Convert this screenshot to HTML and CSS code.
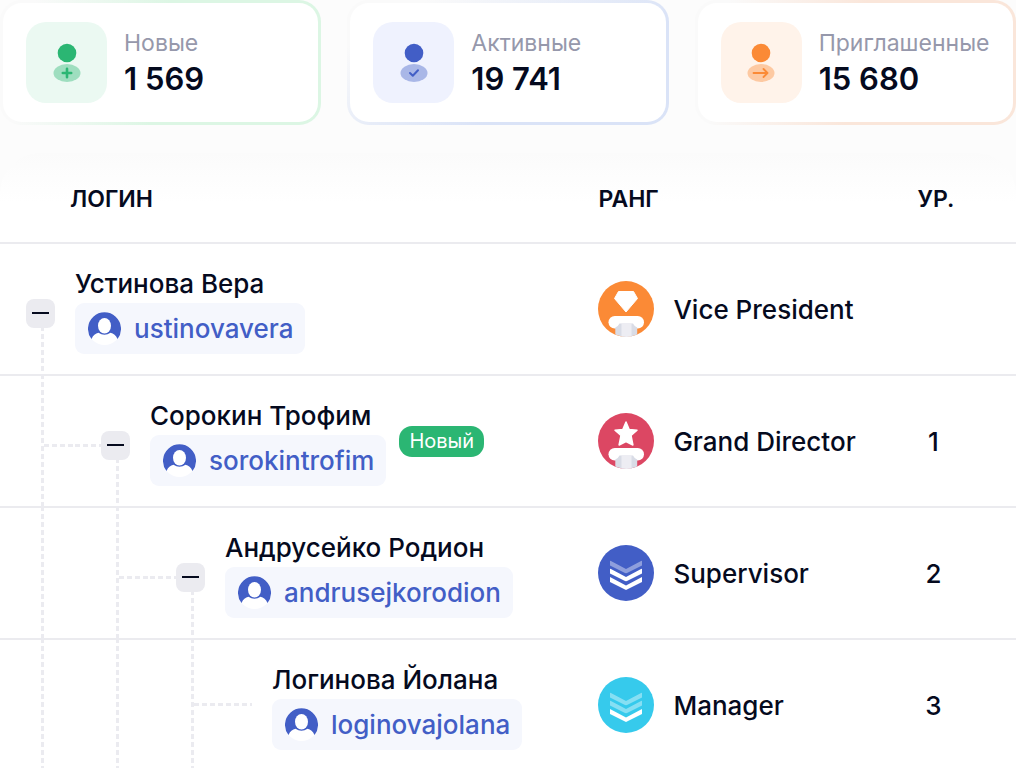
FILE: index.html
```html
<!DOCTYPE html>
<html lang="ru">
<head>
    <meta charset="UTF-8">
    <meta name="viewport" content="width=device-width, initial-scale=1.0">
    <title>Структура</title>
    <link rel="stylesheet" href="styles.css">
</head>
<body>
    <svg width="0" height="0" class="sprite" aria-hidden="true">
        <symbol id="avatar" viewBox="0 0 33 33">
            <circle cx="16.500" cy="16.500" r="16.500" fill="#fff"/>
            <path d="M3.500 27A16.500 16.500 0 1 1 29.500 27C28 23.500 25.500 21.400 22.500 20.800Q16.500 24.500 10.500 20.800C7.500 21.400 5 23.500 3.500 27Z" fill="#425ec6"/>
            <ellipse cx="16.500" cy="13.700" rx="6.500" ry="7.800" fill="#fff"/>
        </symbol>
        <symbol id="column" viewBox="0 0 56 56">
            <rect x="10.500" y="35" width="35.500" height="12.500" rx="6.250" fill="#fff"/>
            <path d="M17.300 46.500Q20.500 45 21.500 42.500H35Q36 45 39.200 46.500V53.500A28 28 0 0 1 17.300 53.500Z" fill="#d9dce6"/>
            <path d="M23.500 42.500H33.500V55.500A28 28 0 0 1 23.500 55.500Z" fill="#ededf3"/>
        </symbol>
        <symbol id="chevron" viewBox="0 0 32 13">
            <path d="M0 0L16 8.500L32 0V5L16 13L0 5Z" fill="#fff"/>
        </symbol>
    </svg>

    <div class="stats">
        <div class="card card-green">
            <div class="card-icon">
                <svg width="28" height="40" viewBox="0 0 28 40">
                    <circle cx="14" cy="10" r="9.300" fill="#2bb673"/>
                    <ellipse cx="14" cy="30" rx="13.500" ry="9" fill="#2bb673" fill-opacity="0.400"/>
                    <path d="M14 25.800V34.200M9.800 30H18.200" stroke="#2bb673" stroke-width="2.600" stroke-linecap="round"/>
                </svg>
            </div>
            <div class="card-text">
                <div class="card-label">Новые</div>
                <div class="card-value">1 569</div>
            </div>
        </div>
        <div class="card card-blue">
            <div class="card-icon">
                <svg width="28" height="40" viewBox="0 0 28 40">
                    <circle cx="14" cy="10" r="9.300" fill="#425ec6"/>
                    <ellipse cx="14" cy="30" rx="13.500" ry="9" fill="#425ec6" fill-opacity="0.400"/>
                    <path d="M10 30L12.800 32.700L18 27.300" fill="none" stroke="#425ec6" stroke-width="2" stroke-linecap="round" stroke-linejoin="round"/>
                </svg>
            </div>
            <div class="card-text">
                <div class="card-label">Активные</div>
                <div class="card-value">19 741</div>
            </div>
        </div>
        <div class="card card-orange">
            <div class="card-icon">
                <svg width="28" height="40" viewBox="0 0 28 40">
                    <circle cx="14" cy="10" r="9.300" fill="#fb8a36"/>
                    <ellipse cx="14" cy="30" rx="13.500" ry="9" fill="#fb8a36" fill-opacity="0.400"/>
                    <path d="M6.500 30H20M16.500 26L20.500 30L16.500 34" fill="none" stroke="#fb8a36" stroke-width="1.800" stroke-linecap="round" stroke-linejoin="round"/>
                </svg>
            </div>
            <div class="card-text">
                <div class="card-label">Приглашенные</div>
                <div class="card-value">15 680</div>
            </div>
        </div>
    </div>

    <table class="team">
        <thead>
            <tr>
                <th class="col-login">ЛОГИН</th>
                <th class="col-rank">РАНГ</th>
                <th class="col-level">УР.</th>
            </tr>
        </thead>
        <tbody>
            <tr>
                <td>
                    <div class="login">
                        <div class="step node root"><button class="toggle" aria-label="Свернуть"></button></div>
                        <div class="person">
                            <div class="name">Устинова Вера</div>
                            <a class="user" href="#"><svg width="33" height="33"><use href="#avatar"/></svg>ustinovavera</a>
                        </div>
                    </div>
                </td>
                <td>
                    <div class="rank">
                        <svg width="56" height="56" viewBox="0 0 56 56">
                            <circle cx="28" cy="28" r="28" fill="#fb8a36"/>
                            <path d="M20.500 10.500H35.500L39.500 17.500L28 31L16.500 17.500Z" fill="#fff" stroke="#fff" stroke-linejoin="round"/>
                            <use href="#column"/>
                        </svg>
                        Vice President
                    </div>
                </td>
                <td class="level"></td>
            </tr>
            <tr>
                <td>
                    <div class="login">
                        <div class="step line branch"></div>
                        <div class="step node"><button class="toggle" aria-label="Свернуть"></button></div>
                        <div class="person">
                            <div class="name">Сорокин Трофим</div>
                            <a class="user" href="#"><svg width="33" height="33"><use href="#avatar"/></svg>sorokintrofim</a>
                        </div>
                        <span class="badge">Новый</span>
                    </div>
                </td>
                <td>
                    <div class="rank">
                        <svg width="56" height="56" viewBox="0 0 56 56">
                            <circle cx="28" cy="28" r="28" fill="#dc4763"/>
                            <path d="M28 9L31.200 16.500L39 17.200L33 22.500L34.900 32L28 28.500L21.100 32L23 22.500L17 17.200L24.800 16.500Z" fill="#fff" stroke="#fff" stroke-width="1.500" stroke-linejoin="round"/>
                            <use href="#column"/>
                        </svg>
                        Grand Director
                    </div>
                </td>
                <td class="level">1</td>
            </tr>
            <tr>
                <td>
                    <div class="login">
                        <div class="step line"></div>
                        <div class="step line branch"></div>
                        <div class="step node"><button class="toggle" aria-label="Свернуть"></button></div>
                        <div class="person">
                            <div class="name">Андрусейко Родион</div>
                            <a class="user" href="#"><svg width="33" height="33"><use href="#avatar"/></svg>andrusejkorodion</a>
                        </div>
                    </div>
                </td>
                <td>
                    <div class="rank">
                        <svg width="56" height="56" viewBox="0 0 56 56">
                            <circle cx="28" cy="28" r="28" fill="#425ec6"/>
                            <use href="#chevron" x="12" y="15.500" width="32" height="13" opacity="0.400"/>
                            <use href="#chevron" x="12" y="23.500" width="32" height="13"/>
                            <use href="#chevron" x="12" y="32" width="32" height="13"/>
                        </svg>
                        Supervisor
                    </div>
                </td>
                <td class="level">2</td>
            </tr>
            <tr>
                <td>
                    <div class="login">
                        <div class="step line"></div>
                        <div class="step line"></div>
                        <div class="step line leaf"></div>
                        <div class="person">
                            <div class="name">Логинова Йолана</div>
                            <a class="user" href="#"><svg width="33" height="33"><use href="#avatar"/></svg>loginovajolana</a>
                        </div>
                    </div>
                </td>
                <td>
                    <div class="rank">
                        <svg width="56" height="56" viewBox="0 0 56 56">
                            <circle cx="28" cy="28" r="28" fill="#36caec"/>
                            <use href="#chevron" x="12" y="15.500" width="32" height="13" opacity="0.400"/>
                            <use href="#chevron" x="12" y="23.500" width="32" height="13" opacity="0.400"/>
                            <use href="#chevron" x="12" y="32" width="32" height="13"/>
                        </svg>
                        Manager
                    </div>
                </td>
                <td class="level">3</td>
            </tr>
        </tbody>
    </table>
</body>
</html>
```
FILE: styles.css
```css
:root {
    --dash-y: repeating-linear-gradient(to bottom, #ebebf0 0 5px, transparent 5px 8px);
    --dash-x: repeating-linear-gradient(to right, #ebebf0 0 5px, transparent 5px 8px);
}
* {
    box-sizing: border-box;
}
body {
    font-family: Inter, sans-serif;
    background-color: #fcfcfc;
    color: #050a1e;
    margin: 0;
}
.sprite {
    display: none;
}

/* Stat cards */
.stats {
    display: grid;
    grid-template-columns: repeat(3, minmax(0, 1fr));
    gap: 26px;
    margin-bottom: 28px;
}
.card {
    display: flex;
    align-items: center;
    gap: 17px;
    padding: 19px 23px;
    border: 3px solid transparent;
    border-radius: 22px;
}
.card-green {
    background: linear-gradient(#fff, #fff) padding-box, linear-gradient(100deg, #fafafa 10%, #dcf6e4 50%) border-box;
}
.card-blue {
    background: linear-gradient(#fff, #fff) padding-box, linear-gradient(150deg, #fafafa 15%, #dae3f7 65%) border-box;
}
.card-orange {
    background: linear-gradient(#fff, #fff) padding-box, linear-gradient(100deg, #fafafa 10%, #fae6da 50%) border-box;
}
.card-icon {
    display: flex;
    align-items: center;
    justify-content: center;
    flex: none;
    width: 81px;
    height: 81px;
    border-radius: 20px;
}
.card-green .card-icon {
    background-color: #ebf9f2;
}
.card-blue .card-icon {
    background-color: #eff2fe;
}
.card-orange .card-icon {
    background-color: #fff3ea;
}
.card-text {
    white-space: nowrap;
}
.card-label {
    font-size: 23px;
    line-height: 32px;
    color: #9698ab;
}
.card-value {
    font-size: 31px;
    font-weight: 600;
    line-height: 40px;
}

/* Team table */
.team {
    width: 100%;
    table-layout: fixed;
    border-spacing: 0;
    border-radius: 40px 40px 0 0;
    background: linear-gradient(#fbfbfb, #fff 50px);
    font-size: 26px;
    font-weight: 500;
}
.team th {
    height: 89px;
    padding: 2px 0 0;
    font-size: 23px;
    font-weight: 600;
    text-align: left;
}
.team td {
    padding: 0;
    border-top: 2px solid #ebebef;
}
.team .col-login {
    width: 58.9%;
    padding-left: 70px;
}
.team .col-level {
    width: 160px;
    text-align: center;
}
.login {
    display: flex;
    align-items: center;
    height: 130px;
}

/* Tree connectors, one step per nesting level */
.step {
    display: flex;
    align-items: center;
    align-self: stretch;
    flex: none;
    width: 75px;
    margin-top: -2px;
    background-repeat: no-repeat;
}
.line {
    background-image: var(--dash-y);
    background-position: 41px 0;
    background-size: 3px 100%;
}
.branch {
    background-image: var(--dash-y), var(--dash-x);
    background-position: 41px 0, 44px 70px;
    background-size: 3px 100%, 31px 3px;
}
.leaf {
    width: 122px;
    background-image: var(--dash-y), var(--dash-x);
    background-position: 41px 0, 44px 65px;
    background-size: 3px 100%, 58px 3px;
}
.node {
    padding: 10px 0 0 26px;
    background-image: var(--dash-y), var(--dash-x);
    background-position: 41px bottom, 0 70px;
    background-size: 3px 48px, 26px 3px;
}
.root {
    background-size: 3px 48px, 0 0;
}
.toggle {
    display: flex;
    align-items: center;
    justify-content: center;
    width: 29px;
    height: 29px;
    padding: 0;
    border: none;
    border-radius: 8px;
    background-color: #ebebf0;
    cursor: pointer;
}
.toggle::before {
    content: '';
    width: 17px;
    height: 2px;
    background-color: #050a1e;
}

.person {
    padding-top: 4px;
    white-space: nowrap;
}
.name {
    margin-bottom: 3px;
    line-height: 32px;
}
.user {
    display: flex;
    align-items: center;
    gap: 13px;
    width: max-content;
    height: 51px;
    padding: 0 12px 0 13px;
    border-radius: 9px;
    background-color: #f5f7fd;
    color: #425ec6;
    text-decoration: none;
}
.badge {
    margin-left: 13px;
    padding: 0 10px;
    border-radius: 13px;
    background-color: #2bb673;
    color: #fff;
    font-size: 20px;
    font-weight: 400;
    line-height: 31px;
}
.rank {
    display: flex;
    align-items: center;
    gap: 19px;
    white-space: nowrap;
}
.team .level {
    padding-right: 5px;
    text-align: center;
}
```
